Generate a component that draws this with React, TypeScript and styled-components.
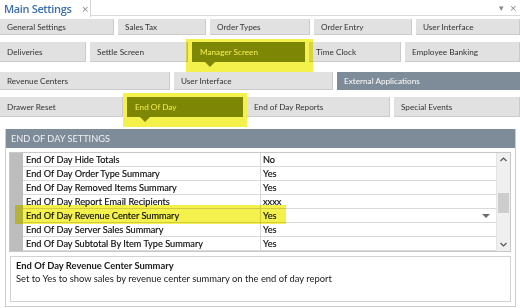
import styled, { createGlobalStyle } from "styled-components";

const GlobalStyle = createGlobalStyle`
  html, body {
    margin: 0;
    padding: 0;
    background: #ffffff;
  }
  body {
    font-family: "Lato", "Open Sans", sans-serif;
  }
`;

interface TabButton {
  label: string;
  width: number;
  selected?: boolean;
  dark?: boolean;
}

interface TabRowData {
  height: number;
  after: number;
  buttons: TabButton[];
}

const tabRows: TabRowData[] = [
  {
    height: 16,
    after: 7,
    buttons: [
      { label: "General Settings", width: 114 },
      { label: "Sales Tax", width: 88 },
      { label: "Order Types", width: 100 },
      { label: "Order Entry", width: 98 },
      { label: "User Interface", width: 104 },
    ],
  },
  {
    height: 20,
    after: 10,
    buttons: [
      { label: "Deliveries", width: 86 },
      { label: "Settle Screen", width: 98 },
      { label: "Manager Screen", width: 113, selected: true },
      { label: "Time Clock", width: 92 },
      { label: "Employee Banking", width: 115 },
    ],
  },
  {
    height: 18,
    after: 7,
    buttons: [
      { label: "Revenue Centers", width: 170 },
      { label: "User Interface", width: 159 },
      { label: "External Applications", width: 183, dark: true },
    ],
  },
  {
    height: 20,
    after: 12,
    buttons: [
      { label: "Drawer Reset", width: 123 },
      { label: "End Of Day", width: 116, selected: true },
      { label: "End of Day Reports", width: 143 },
      { label: "Special Events", width: 126 },
    ],
  },
];

const settings = [
  { name: "End Of Day Hide Totals", value: "No" },
  { name: "End Of Day Order Type Summary", value: "Yes" },
  { name: "End Of Day Removed Items Summary", value: "Yes" },
  { name: "End Of Day Report Email Recipients", value: "xxxx" },
  { name: "End Of Day Revenue Center Summary", value: "Yes", active: true },
  { name: "End Of Day Server Sales Summary", value: "Yes" },
  { name: "End Of Day Subtotal By Item Type Summary", value: "Yes" },
];

export default function App() {
  return (
    <Page>
      <GlobalStyle />
      <TitleBar>
        <DocTab>
          <DocTitle>Main Settings</DocTitle>
          <TabClose>×</TabClose>
        </DocTab>
        <TitleRest>
          <WindowGlyph>▾</WindowGlyph>
          <WindowGlyph>×</WindowGlyph>
        </TitleRest>
      </TitleBar>

      <TabRows>
        {tabRows.map((row, i) => (
          <TabRow key={i} $h={row.height} $after={row.after}>
            {row.buttons.map((b) => (
              <Button key={b.label} $w={b.width} $selected={b.selected} $dark={b.dark}>
                {b.label}
                {b.selected && <Pointer />}
              </Button>
            ))}
          </TabRow>
        ))}
      </TabRows>

      <SettingsPanel>
        <PanelHeader>END OF DAY SETTINGS</PanelHeader>
        <PanelBody>
          <Grid>
            <Gutter />
            <GridRows>
              {settings.map((s) => (
                <GridRow key={s.name}>
                  <NameCell>{s.name}</NameCell>
                  <ValueCell>
                    {s.value}
                    {s.active && <DropArrow />}
                  </ValueCell>
                </GridRow>
              ))}
            </GridRows>
            <ScrollBar>
              <ScrollArrow>
                <svg width="7" height="5" viewBox="0 0 7 5">
                  <path d="M0.5 4 L3.5 1 L6.5 4" stroke="#555" strokeWidth="1.2" fill="none" />
                </svg>
              </ScrollArrow>
              <ScrollTrack>
                <ScrollThumb />
              </ScrollTrack>
              <ScrollArrow>
                <svg width="7" height="5" viewBox="0 0 7 5">
                  <path d="M0.5 1 L3.5 4 L6.5 1" stroke="#555" strokeWidth="1.2" fill="none" />
                </svg>
              </ScrollArrow>
            </ScrollBar>
          </Grid>
          <Description>
            <DescTitle>End Of Day Revenue Center Summary</DescTitle>
            <DescText>Set to Yes to show sales by revenue center summary on the end of day report</DescText>
          </Description>
        </PanelBody>
      </SettingsPanel>

      <Highlight style={{ left: 186, top: 39, width: 127, height: 33 }} />
      <Highlight style={{ left: 123, top: 93, width: 124, height: 34 }} />
      <Highlight style={{ left: 15, top: 205, width: 271, height: 19 }} />
    </Page>
  );
}

const Page = styled.div`
  position: relative;
  width: 520px;
  height: 308px;
  overflow: hidden;
  background: #ffffff;
  isolation: isolate;
`;

const TitleBar = styled.div`
  display: flex;
  height: 17px;
`;

const DocTab = styled.div`
  flex: 0 0 91px;
  box-sizing: border-box;
  display: flex;
  align-items: center;
  gap: 10px;
  padding-left: 4px;
  border-right: 1px solid #d4d4d4;
  background: #ffffff;
  white-space: nowrap;
`;

const DocTitle = styled.span`
  font-family: "Open Sans", sans-serif;
  font-size: 11px;
  font-weight: 600;
  color: #3a6fb4;
  letter-spacing: -0.35px;
`;

const TabClose = styled.span`
  font-family: "DejaVu Sans", sans-serif;
  font-size: 9px;
  color: #8a8a8a;
`;

const TitleRest = styled.div`
  flex: 1;
  display: flex;
  justify-content: flex-end;
  align-items: center;
  gap: 6px;
  padding-right: 3px;
  border-bottom: 1px solid #dadada;
  height: 15px;
`;

const WindowGlyph = styled.span`
  font-family: "DejaVu Sans", sans-serif;
  font-size: 9px;
  color: #8a8a8a;
`;

const TabRows = styled.div`
  display: flex;
  flex-direction: column;
  padding-top: 2px;
`;

const TabRow = styled.div<{ $h: number; $after: number }>`
  display: flex;
  gap: 4px;
  height: ${(p) => p.$h}px;
  margin-bottom: ${(p) => p.$after}px;
`;

const Button = styled.div<{ $w: number; $selected?: boolean; $dark?: boolean }>`
  position: relative;
  flex: 0 0 ${(p) => p.$w}px;
  display: flex;
  align-items: center;
  padding-left: ${(p) => (p.$selected ? 8 : 7)}px;
  box-sizing: border-box;
  font-family: "Lato", sans-serif;
  font-size: 8.2px;
  color: ${(p) => (p.$selected || p.$dark ? "#ffffff" : "#333333")};
  background: ${(p) => (p.$selected ? "#83900f" : p.$dark ? "#7e8b98" : "#e1e1e1")};
  box-shadow: ${(p) =>
    p.$selected || p.$dark ? "none" : "inset -1px -1px 0 #cbcbcb"};
  white-space: nowrap;
`;

const Pointer = styled.span`
  position: absolute;
  left: 13px;
  top: 100%;
  width: 0;
  height: 0;
  border-left: 5px solid transparent;
  border-right: 5px solid transparent;
  border-top: 5px solid #83900f;
`;

const SettingsPanel = styled.div`
  margin-left: 5px;
  width: 511px;
  height: 178px;
  box-sizing: border-box;
  border: 1px solid #c9ced3;
  border-top: none;
  display: flex;
  flex-direction: column;
`;

const PanelHeader = styled.div`
  height: 19px;
  display: flex;
  align-items: center;
  padding-left: 5px;
  background: #7e8b98;
  color: #eef1f4;
  font-family: "Lato", sans-serif;
  font-size: 9.2px;
`;

const PanelBody = styled.div`
  display: flex;
  flex-direction: column;
  gap: 4px;
  padding: 4px 4px 0 3px;
`;

const Grid = styled.div`
  display: flex;
  height: 100px;
  box-sizing: border-box;
  border: 1px solid #c8c8c8;
  background: #ffffff;
`;

const Gutter = styled.div`
  flex: 0 0 13px;
  background: #bdbdbd;
`;

const GridRows = styled.div`
  flex: 1;
  display: flex;
  flex-direction: column;
`;

const GridRow = styled.div`
  display: grid;
  grid-template-columns: 238px 1fr;
  height: 14px;
  box-sizing: border-box;
  border-bottom: 1px solid #d9d9d9;
`;

const NameCell = styled.div`
  display: flex;
  align-items: center;
  padding-left: 3px;
  border-right: 1px solid #d9d9d9;
  font-family: "Lato", sans-serif;
  font-size: 9.2px;
  color: #0c0c0c;
  -webkit-text-stroke: 0.15px #0c0c0c;
  white-space: nowrap;
`;

const ValueCell = styled.div`
  position: relative;
  display: flex;
  align-items: center;
  padding-left: 2px;
  font-family: "Lato", sans-serif;
  font-size: 9.2px;
  color: #0c0c0c;
  -webkit-text-stroke: 0.15px #0c0c0c;
`;

const DropArrow = styled.span`
  position: absolute;
  right: 6px;
  top: 5px;
  width: 0;
  height: 0;
  border-left: 4px solid transparent;
  border-right: 4px solid transparent;
  border-top: 4px solid #6d6d6d;
`;

const ScrollBar = styled.div`
  flex: 0 0 13px;
  display: flex;
  flex-direction: column;
  background: #f0f0f0;
  border-left: 1px solid #e4e4e4;
`;

const ScrollArrow = styled.div`
  height: 13px;
  display: flex;
  align-items: center;
  justify-content: center;
`;

const ScrollTrack = styled.div`
  flex: 1;
  position: relative;
`;

const ScrollThumb = styled.div`
  position: absolute;
  left: 1px;
  right: 1px;
  top: 27px;
  height: 20px;
  background: #cdcdcd;
`;

const Description = styled.div`
  height: 46px;
  margin-left: 1px;
  box-sizing: border-box;
  border: 1px solid #d2d2d2;
  padding: 2px 5px;
  background: #ffffff;
`;

const DescTitle = styled.div`
  font-family: "Lato", sans-serif;
  font-weight: 700;
  font-size: 9.4px;
  color: #1a1a1a;
  line-height: 13px;
`;

const DescText = styled.div`
  font-family: "Lato", sans-serif;
  font-size: 9.4px;
  color: #1a1a1a;
  line-height: 13px;
`;

const Highlight = styled.div`
  position: absolute;
  background: #f4f04c;
  mix-blend-mode: multiply;
  pointer-events: none;
`;
